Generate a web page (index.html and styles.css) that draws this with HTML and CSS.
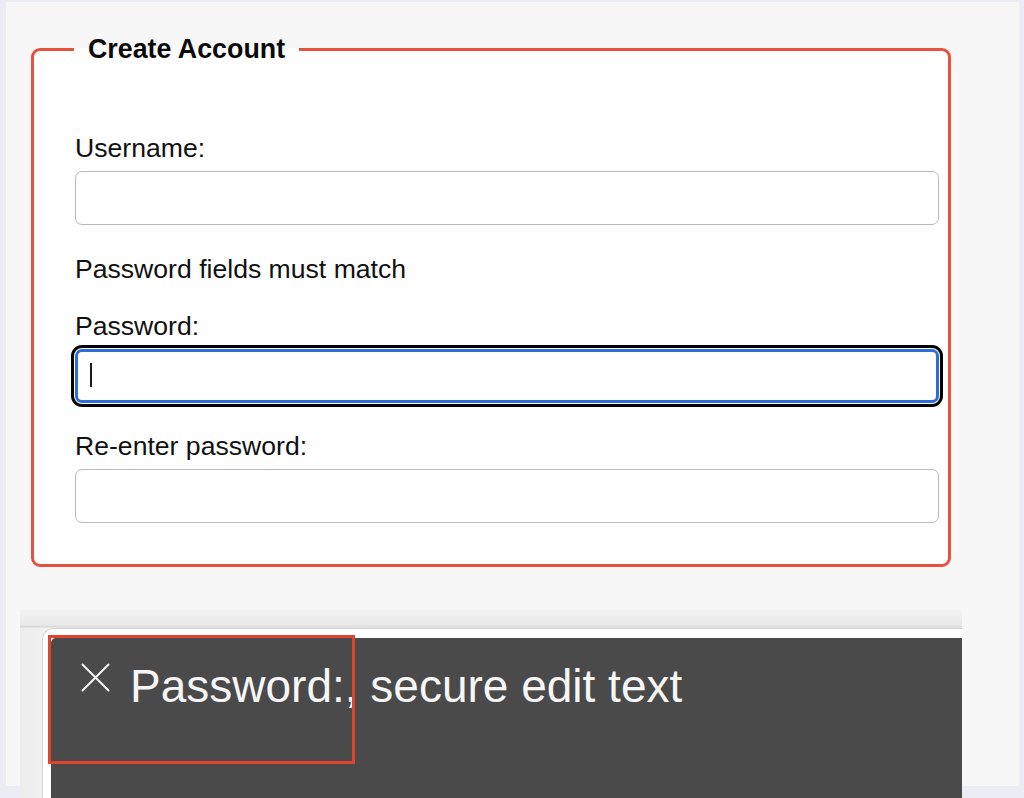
FILE: index.html
```html
<!DOCTYPE html>
<html lang="en">
<head>
<meta charset="utf-8">
<title>Create Account</title>
<link rel="stylesheet" href="styles.css">
</head>
<body>
<div class="panel">
  <form class="account">
    <fieldset class="box">
      <legend class="box-title">Create Account</legend>
      <div class="fields">
        <div class="field">
          <label class="label" for="username">Username:</label>
          <input class="input" id="username" type="text">
        </div>
        <p class="note">Password fields must match</p>
        <div class="field gap-a">
          <label class="label" for="pw">Password:</label>
          <div class="input-wrap">
            <input class="input focused" id="pw" type="password">
            <span class="caret"></span>
          </div>
        </div>
        <div class="field gap-b">
          <label class="label" for="pw2">Re-enter password:</label>
          <input class="input" id="pw2" type="password">
        </div>
      </div>
    </fieldset>
  </form>
  <div class="shot">
    <div class="card">
      <div class="caption">
        <div class="caption-row">
          <svg class="close" width="29" height="29" viewBox="0 0 29 29" aria-hidden="true">
            <path d="M1.5 1.5 L27.5 27.5 M27.5 1.5 L1.5 27.5" stroke="#f4f4f4" stroke-width="2" stroke-linecap="round" fill="none"/>
          </svg>
          <span class="caption-text">Password:, secure edit text</span>
        </div>
      </div>
      <div class="highlight"></div>
    </div>
  </div>
</div>
</body>
</html>
```

FILE: styles.css
```css
html, body {
  margin: 0;
  padding: 0;
  overflow: hidden;
  height: 798px;
}
body {
  background: #eaedf3;
  font-family: "Liberation Sans", Arial, Helvetica, sans-serif;
  color: #111;
}
.panel {
  margin: 2px 5px 0 6px;
  height: 784px;
  background: #f7f7f8;
  padding-top: 32px;
  box-sizing: border-box;
}
.account {
  margin: 0 0 0 25px;
}
.box {
  box-sizing: border-box;
  width: 920px;
  margin: 0;
  border: 3px solid #e5533f;
  border-radius: 9px;
  background: #fefefe;
  padding: 69px 9px 41px 41px;
}
.box-title {
  font-weight: bold;
  font-size: 26.8px;
  line-height: 30px;
  padding: 0 14px;
  margin-left: -1px;
  color: #0b0b0b;
}
.fields {
  display: flex;
  flex-direction: column;
}
.field {
  display: flex;
  flex-direction: column;
  gap: 8px;
}
.label, .note {
  display: block;
  font-size: 26.6px;
  line-height: 30px;
  margin: 0;
}
.note {
  margin-top: 29px;
}
.gap-a { margin-top: 27px; }
.gap-b { margin-top: 28px; }
.input {
  box-sizing: border-box;
  width: 100%;
  height: 54px;
  margin: 0;
  border: 1.5px solid #b9b9b9;
  border-radius: 7px;
  background: #fff;
  font: inherit;
  padding: 0 14px;
}
.input-wrap {
  position: relative;
}
.input.focused {
  border: 3px solid #2e6dd5;
  outline: 3px solid #000;
  outline-offset: 1.5px;
  border-radius: 7px;
}
.caret {
  position: absolute;
  left: 15px;
  top: 14px;
  width: 2px;
  height: 24px;
  background: #1a1a1a;
}
.shot {
  margin: 43px 0 0 14px;
  padding-top: 18px;
  width: 942px;
  height: 200px;
  box-sizing: border-box;
  background:
    linear-gradient(to bottom, #f3f3f3 0, #e9e9e9 15px, #d6d6d6 17px, transparent 18px),
    linear-gradient(to right, #ececec 0, #f1f1f1 22px);
}
.card {
  position: relative;
  margin: 0 0 0 22px;
  width: 920px;
  height: 182px;
  box-sizing: border-box;
  background: #fff;
  border-top: 1px solid #d3d3d3;
  border-left: 1px solid #d3d3d3;
  border-top-left-radius: 12px;
  padding: 9px 0 0 8px;
}
.caption {
  background: #4a4a4a;
  height: 100%;
  border-top-left-radius: 5px;
}
.caption-row {
  display: flex;
  align-items: flex-start;
  gap: 20px;
  padding: 21px 0 0 30px;
}
.close {
  margin-top: 4px;
  flex: none;
}
.caption-text {
  color: #f6f6f6;
  font-size: 46px;
  line-height: 54px;
}
.highlight {
  position: absolute;
  left: 5px;
  top: 6px;
  width: 307px;
  height: 129px;
  box-sizing: border-box;
  border: 3px solid #e2432c;
}
```
